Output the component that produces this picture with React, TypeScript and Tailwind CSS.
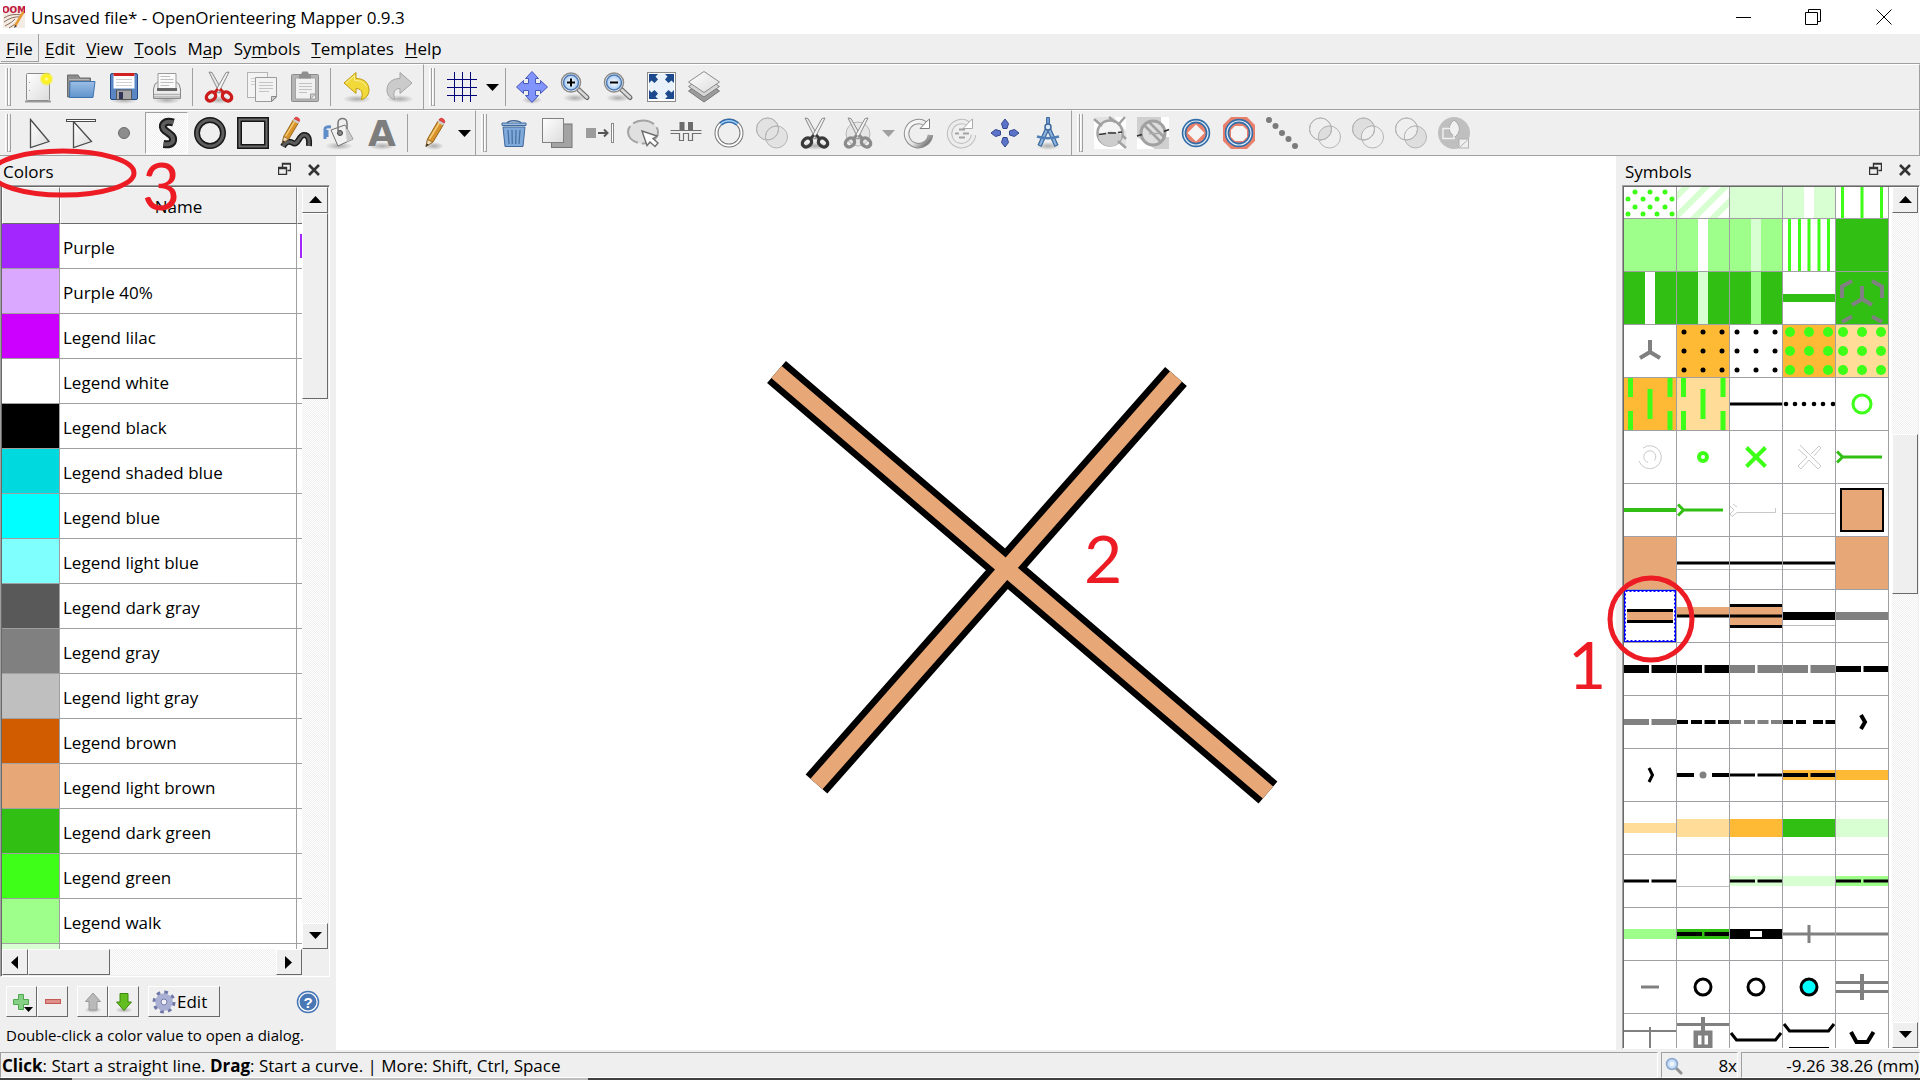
import React from "react";

type Kids = { children?: React.ReactNode };

function Icon({ children }: Kids) {
  return (
    <svg viewBox="0 0 32 32" className="h-8 w-8 shrink-0 overflow-visible" fill="none" aria-hidden="true">
      {children}
    </svg>
  );
}

function Gradients() {
  return (
    <svg className="absolute h-0 w-0" aria-hidden="true">
      <defs>
        <linearGradient id="paper" x1="0" y1="0" x2="1" y2="1">
          <stop offset="0" stopColor="#ffffff" />
          <stop offset="1" stopColor="#dcdcdc" />
        </linearGradient>
        <linearGradient id="blueFolder" x1="0" y1="0" x2="0" y2="1">
          <stop offset="0" stopColor="#9dbfe6" />
          <stop offset="1" stopColor="#5f93cc" />
        </linearGradient>
        <linearGradient id="ring" x1="0" y1="0" x2="1" y2="1">
          <stop offset="0" stopColor="#ffffff" />
          <stop offset="0.6" stopColor="#e2e2e2" />
          <stop offset="1" stopColor="#555555" />
        </linearGradient>
        <radialGradient id="glow">
          <stop offset="0" stopColor="#ffffc0" />
          <stop offset="0.35" stopColor="#fff21a" />
          <stop offset="0.7" stopColor="#f7ee3a" />
          <stop offset="1" stopColor="#fff21a" stopOpacity="0" />
        </radialGradient>
        <radialGradient id="lens">
          <stop offset="0" stopColor="#ffffff" />
          <stop offset="1" stopColor="#a9cbf2" />
        </radialGradient>
        <radialGradient id="shade">
          <stop offset="0" stopColor="#000000" stopOpacity="0.28" />
          <stop offset="1" stopColor="#000000" stopOpacity="0" />
        </radialGradient>
      </defs>
    </svg>
  );
}

const Shadow = ({ y = 28, rx = 14 }: { y?: number; rx?: number }) => <ellipse cx="16" cy={y} rx={rx} ry="4" fill="url(#shade)" />;

const Pencil = () => (
  <>
    <path d="M8 29.500 L9.500 22 L20 4 L25.500 7.500 L15 25 Z" fill="#d8932a" stroke="#8a5a14" strokeWidth="0.900" />
    <path d="M11.500 22 L21.500 5.500" stroke="#f6cf7a" strokeWidth="1.500" />
    <path d="M8 29.500 L9.500 22.500 L14.500 25.300 Z" fill="#f4dfb8" stroke="#8a6a3a" strokeWidth="0.800" />
    <path d="M8 29.500 L8.700 26.500 L10.800 27.800 Z" fill="#222" />
    <path d="M19.500 5 L21 2.500 L26.500 6 L25 8.500 Z" fill="#cfcfcf" />
    <path d="M21 3 C22 -0.500 28 2 26.500 6 Z" fill="#ef4444" stroke="#b91c1c" strokeWidth="0.600" />
  </>
);

const Blades = () => (
  <>
    <path d="M6 1 L9 1.500 L20 21 L16.500 22 Z" fill="#e6e6e6" stroke="#8a8a8a" />
    <path d="M26 1 L23 1.500 L12 21 L15.500 22 Z" fill="#f4f4f4" stroke="#8a8a8a" />
  </>
);

const Handles = ({ c }: { c: string }) => (
  <>
    <ellipse cx="8" cy="25.500" rx="5" ry="4" transform="rotate(-40 8 25.500)" stroke={c} strokeWidth="3.400" />
    <ellipse cx="24" cy="25.500" rx="5" ry="4" transform="rotate(40 24 25.500)" stroke={c} strokeWidth="3.400" />
    <path d="M11 22 L15 18 M21 22 L17 18" stroke={c} strokeWidth="3" />
  </>
);

const NewIcon = () => (
  <Icon>
    <path d="M3 30.500 H29" stroke="#9a9a9a" strokeWidth="2" />
    <rect x="4.500" y="2.500" width="23" height="27" rx="1" fill="url(#paper)" stroke="#8b8b8b" />
    <path d="M7.500 11 v1 M7.500 19 v1" stroke="#999" />
    <circle cx="24.500" cy="8" r="7" fill="url(#glow)" />
  </Icon>
);
const OpenIcon = () => (
  <Icon>
    <path d="M2.500 26 V4 H13 L15 7 H25.500 V26 Z" fill="#8d8d8d" stroke="#6b6b6b" />
    <path d="M4 8.500 H24" stroke="#b5b5b5" />
    <path d="M5 10.500 H30 L28 26.500 H4.500 Z" fill="url(#blueFolder)" stroke="#3f72ad" />
  </Icon>
);
const SaveIcon = () => (
  <Icon>
    <Shadow y={29} />
    <rect x="2.500" y="2.500" width="27" height="26" rx="1.500" fill="#5a87c4" stroke="#234a86" />
    <rect x="5.500" y="2.500" width="21" height="15" fill="#fff" />
    <rect x="5.500" y="2" width="21" height="3" fill="#d02020" />
    <path d="M8 8.500 H24 M8 11.500 H24 M8 14.500 H24" stroke="#cfcfcf" />
    <rect x="8.500" y="19" width="15" height="9.500" fill="#a8a8a8" stroke="#555" />
    <rect x="11" y="21" width="4" height="7" fill="#335" />
  </Icon>
);
const PrintIcon = () => (
  <Icon>
    <Shadow y={29} />
    <path d="M4 13 L7 11 H25 L28 13 L29.500 18 V27.500 H2.500 V18 Z" fill="#ececec" stroke="#8a8a8a" />
    <path d="M7 18 V2.500 H25 V18 Z" fill="#fafafa" stroke="#9a9a9a" />
    <path d="M9.500 5.500 H19 M9.500 8.500 H22.500 M9.500 11.500 H22.500 M9.500 14.500 H18" stroke="#bdbdbd" />
    <rect x="6" y="17" width="20" height="3" fill="#666" />
    <path d="M3 23.500 H29 M3 26 H29" stroke="#b2b2b2" strokeWidth="1.500" />
  </Icon>
);
const CutIcon = () => (
  <Icon>
    <Shadow y={29} />
    <Blades />
    <Handles c="#cc1c1c" />
  </Icon>
);
const CopyIcon = () => (
  <Icon>
    <rect x="1.500" y="1.500" width="20" height="25" fill="#f3f3f3" stroke="#b4b4b4" />
    <path d="M5 7.500 H18 M5 10.500 H18 M5 13.500 H9" stroke="#cfcfcf" />
    <path d="M9.500 6.500 H30.500 V26 L26 30.500 H9.500 Z" fill="#f2f2f2" stroke="#9b9b9b" />
    <path d="M13 11.500 H27 M13 14.500 H27 M13 17.500 H27 M13 20.500 H23" stroke="#c4c4c4" />
    <path d="M30.500 25.500 H25.500 V30.500 Z" fill="#cfcfcf" stroke="#8b8b8b" />
  </Icon>
);
const PasteIcon = () => (
  <Icon>
    <rect x="2.500" y="3.500" width="27" height="27" rx="1" fill="#b4b4b4" stroke="#8d8d8d" />
    <path d="M6.500 7 H26.500 V28 H6.500 Z" fill="#f1f1f1" stroke="#a4a4a4" />
    <path d="M10 3 H12 L13.500 0.500 H18.500 L20 3 H22 V7.500 H10 Z" fill="#8f8f8f" />
    <path d="M10 12.500 H23 M10 15.500 H23 M10 18.500 H23 M10 21.500 H18" stroke="#c2c2c2" />
    <path d="M26.500 23 H21.500 V28 Z" fill="#d2d2d2" stroke="#9b9b9b" />
  </Icon>
);
const turn = "M3 12 L15 1.500 V7.500 C24 7.500 28 13 28 19 C28 24 25 27.500 20 28.500 C22 24 22 17.500 15 17.500 V22.500 Z";
const UndoIcon = () => (
  <Icon>
    <Shadow y={28} />
    <path d={turn} fill="#f2d93a" stroke="#c09c10" strokeLinejoin="round" />
    <path d="M5 12 L13.500 4.500 V9.500 C20 9.500 24 12 25.500 16" stroke="#fbf0a0" />
  </Icon>
);
const RedoIcon = () => (
  <Icon>
    <Shadow y={28} />
    <path d={turn} transform="translate(31 0) scale(-1 1)" fill="#cbcbcb" stroke="#a5a5a5" strokeLinejoin="round" />
  </Icon>
);
const GridIcon = () => (
  <Icon>
    <path d="M8.500 1 V31 M16.500 1 V31 M24.500 1 V31 M1 8.500 H31 M1 16.500 H31 M1 24.500 H31" stroke="#000078" />
  </Icon>
);
const MoveIcon = () => (
  <Icon>
    <Shadow y={29} rx={10} />
    <path
      d="M16 0.500 L22.500 7.500 H19.500 V12.500 H24.500 V9.500 L31.500 16 L24.500 22.500 V19.500 H19.500 V24.500 H22.500 L16 31.500 L9.500 24.500 H12.500 V19.500 H7.500 V22.500 L0.500 16 L7.500 9.500 V12.500 H12.500 V7.500 H9.500 Z"
      fill="#8094fb"
      stroke="#4659b8"
      strokeLinejoin="round"
    />
  </Icon>
);
const Zoom = ({ plus }: { plus: boolean }) => (
  <Icon>
    <Shadow y={27} rx={12} />
    <path d="M19 18 L28 26.500" stroke="#6d6d6d" strokeWidth="5" strokeLinecap="round" />
    <path d="M20 19 L28 26.500" stroke="#d9d9d9" strokeWidth="2.500" strokeLinecap="round" />
    <circle cx="12" cy="11.500" r="9.500" fill="#fff" stroke="#8b8b8b" strokeWidth="1.500" />
    <circle cx="12" cy="11.500" r="7.500" fill="url(#lens)" stroke="#4a78b5" strokeWidth="1.500" />
    <path d={plus ? "M8 11.500 H16 M12 7.500 V15.500" : "M8 11.500 H16"} stroke="#000" strokeWidth="2" />
  </Icon>
);
const FitIcon = () => (
  <Icon>
    <rect x="2.500" y="1.500" width="28" height="29" fill="#fff" stroke="#8a8a8a" />
    <rect x="4" y="3" width="25" height="25" fill="#e9f2fa" />
    <g fill="#1c4a8c">
      <path d="M4 3 H13 L10.500 5.500 L13 8.500 L9.500 12 L6.500 9.500 L4 12 Z" />
      <path d="M29 3 H20 L22.500 5.500 L20 8.500 L23.500 12 L26.500 9.500 L29 12 Z" />
      <path d="M4 28 H13 L10.500 25.500 L13 22.500 L9.500 19 L6.500 21.500 L4 19 Z" />
      <path d="M29 28 H20 L22.500 25.500 L20 22.500 L23.500 19 L26.500 21.500 L29 19 Z" />
    </g>
  </Icon>
);
const LayersIcon = () => (
  <Icon>
    <path d="M0.500 20 L16 9 L31.500 20 L16 31 Z" fill="#9b9b9b" stroke="#777" />
    <path d="M0.500 15.500 L16 5 L31.500 15.500 L16 26 Z" fill="#d5d5d5" stroke="#808080" />
    <path d="M0.500 11 L16 0.500 L31.500 11 L16 21.500 Z" fill="url(#paper)" stroke="#8c8c8c" />
  </Icon>
);

const PointerIcon = () => (
  <Icon>
    <path d="M8.500 2.500 L27 24.500 L8.500 30.500 Z" fill="url(#paper)" stroke="#4b4b4b" strokeWidth="1.300" />
  </Icon>
);
const LineEditIcon = () => (
  <Icon>
    <path d="M8.500 4.500 L26.500 24.500 L8.500 30.500 Z" fill="url(#paper)" stroke="#4b4b4b" strokeWidth="1.300" />
    <rect x="1.500" y="2.500" width="29" height="2" fill="#fff" stroke="#4b4b4b" />
  </Icon>
);
const PointIcon = () => (
  <Icon>
    <circle cx="16" cy="16" r="5.500" fill="#8c8c8c" stroke="#6b6b6b" />
  </Icon>
);
const curve = "M22.500 5.500 C13 2.500 9 9 14 13.500 C19 17 24 20 21.500 25 C19.500 28 16 27.500 12.500 27";
const PathIcon = () => (
  <Icon>
    <path d={curve} stroke="#1a1a1a" strokeWidth="8" strokeLinecap="butt" />
    <path d={curve} stroke="#5c5c5c" strokeWidth="4" />
  </Icon>
);
const CircleIcon = () => (
  <Icon>
    <circle cx="16" cy="16" r="13" fill="#efefef" stroke="#161616" strokeWidth="6" />
    <circle cx="16" cy="16" r="13" stroke="#5c5c5c" strokeWidth="3" />
  </Icon>
);
const RectIcon = () => (
  <Icon>
    <rect x="2.500" y="2.500" width="27" height="27" stroke="#161616" strokeWidth="5" />
    <rect x="2.500" y="2.500" width="27" height="27" stroke="#6a6a6a" strokeWidth="2" />
  </Icon>
);
const freehand = "M3 29.500 C6 24 10 24 13 26 C18 29 19 18 24 18 C29 18 29.500 23 29 29";
const FreehandIcon = () => (
  <Icon>
    <path d={freehand} stroke="#1a1a1a" strokeWidth="6" />
    <path d={freehand} stroke="#5c5c5c" strokeWidth="3" />
    <g transform="translate(-5 -1) scale(0.920)">
      <Pencil />
    </g>
  </Icon>
);
const FillIcon = () => (
  <Icon>
    <Shadow y={29} />
    <path d="M2 22 V12 C2 10 4 9.500 8 10 M4 20 V13" stroke="#5f8dc9" strokeWidth="3" />
    <path d="M8 13 L22 8 L30 22 L15 29 Z" fill="#f1f1f1" stroke="#6f6f6f" strokeLinejoin="round" />
    <path d="M22 8 L30 22 L24 25 Z" fill="#c9c9c9" />
    <path d="M15 14 V6 C15 0 24 0 24 6 V12" stroke="#777" strokeWidth="1.500" />
    <circle cx="17" cy="16" r="2.500" fill="#888" stroke="#444" />
  </Icon>
);
const TextIcon = () => (
  <Icon>
    <Shadow y={29} />
    <text x="16" y="29" textAnchor="middle" className="font-['DejaVu_Sans'] text-[36px] font-bold" fill="#7d7d7d">
      A
    </text>
  </Icon>
);
const PencilIcon = () => (
  <Icon>
    <Shadow y={29} rx={10} />
    <Pencil />
  </Icon>
);
const TrashIcon = () => (
  <Icon>
    <path d="M5 10 H27 L25 29.500 H7 Z" fill="#7fa9da" stroke="#41699a" />
    <path d="M10 13 L11 27 M14 13 L14.300 27 M18 13 L17.700 27 M22 13 L21 27" stroke="#48719f" strokeWidth="1.300" />
    <path d="M4 8.500 V6 H28 V8.500 Z" fill="#9dbfe6" stroke="#41699a" />
    <path d="M9 6 C11 3 21 3 23 6" stroke="#41699a" strokeWidth="1.500" />
  </Icon>
);
const DuplicateIcon = () => (
  <Icon>
    <rect x="10.500" y="7" width="20.500" height="23.500" fill="#a3a3a3" stroke="#777" />
    <rect x="1.500" y="1.500" width="21" height="24" fill="url(#paper)" stroke="#808080" />
  </Icon>
);
const SwitchIcon = () => (
  <Icon>
    <rect x="2" y="11" width="10" height="10" fill="#9c9c9c" />
    <path d="M14 16 H23 M20 12.500 L23.500 16 L20 19.500" stroke="#555" strokeWidth="2" />
    <rect x="27.500" y="6.500" width="2" height="19" fill="#fff" stroke="#8a8a8a" />
  </Icon>
);
const RotateSelIcon = () => (
  <Icon>
    <ellipse cx="16" cy="15" rx="15" ry="11.500" fill="#e0e0e0" stroke="#a3a3a3" strokeWidth="2" strokeDasharray="22 4" />
    <path d="M15 14 L30 19 L26 21.500 L31 26 L28 29.500 L23 25 L20 28.500 Z" fill="#fff" stroke="#6e6e6e" strokeWidth="1.400" />
  </Icon>
);
const BreakIcon = () => (
  <Icon>
    <path d="M9.500 5 h5 v8 h-5 z M18 5 h5 v8 h-5 z" fill="#6b6b6b" />
    <path d="M0.500 13.500 H31.500 M0.500 16.500 H9.500 V23.500 H13.500 V16.500 H18.500 V23.500 H22.500 V16.500 H31.500" stroke="#707070" strokeWidth="1.200" />
  </Icon>
);
const RingIcon = () => (
  <Icon>
    <circle cx="16" cy="16" r="12.500" stroke="#777" strokeWidth="4" />
    <circle cx="16" cy="16" r="12.500" stroke="#fff" strokeWidth="2" />
    <path d="M7.500 7 A12.500 12.500 0 0 1 24.500 7" stroke="#2c6cb0" strokeWidth="4" />
    <path d="M7.500 7 A12.500 12.500 0 0 1 24.500 7" stroke="#a6d0f5" strokeWidth="1.500" />
  </Icon>
);
const Venn = ({ left = "none", right = "none", mid = "none" }: { left?: string; right?: string; mid?: string }) => (
  <Icon>
    <circle cx="11.500" cy="12" r="11" fill={left} stroke="#b5b5b5" />
    <circle cx="20.500" cy="20" r="11" fill={right} stroke="#b5b5b5" />
    <path d="M9.700 22.700 A11 11 0 0 1 22.200 9.200 A11 11 0 0 1 9.700 22.700 Z" fill={mid} stroke="#b5b5b5" />
    <circle cx="11.500" cy="12" r="11" stroke="#b5b5b5" />
  </Icon>
);
const SplitIcon = () => (
  <Icon>
    <Shadow y={29} />
    <Blades />
    <Handles c="#3a3a3a" />
  </Icon>
);
const CutHoleIcon = () => (
  <Icon>
    <circle cx="16" cy="17" r="12" fill="#e6e6e6" stroke="#b8b8b8" />
    <Blades />
    <Handles c="#8b8b8b" />
  </Icon>
);
const RotateIcon = ({ faint = false }: { faint?: boolean }) => (
  <Icon>
    <path d="M22 6.500 A12 12 0 1 0 27.500 18" stroke={faint ? "#bcbcbc" : "#8f8f8f"} strokeWidth="5.500" />
    <path d="M22 6.500 A12 12 0 1 0 27.500 18" stroke={faint ? "#ececec" : "url(#ring)"} strokeWidth="3.500" />
    <path d="M26.500 2 V11.500 H17 L20.500 8 L23 5 Z" fill="#fff" stroke={faint ? "#aaa" : "#7f7f7f"} />
    {faint && <path d="M13 12.500 h6 M9 16.500 h4 M17 16.500 h6 M13 20.500 h6" stroke="#a3a3a3" strokeWidth="2" />}
  </Icon>
);
const ScaleIcon = () => (
  <Icon>
    <g fill="#5b74c9" stroke="#34468c" strokeLinejoin="round">
      <path d="M16 2 L19.500 6.500 L18 11.500 H14 L12.500 6.500 Z" />
      <path d="M16 30 L19.500 25.500 L18 20.500 H14 L12.500 25.500 Z" />
      <path d="M2 16 L6.500 12.500 L11.500 14 V18 L6.500 19.500 Z" />
      <path d="M30 16 L25.500 12.500 L20.500 14 V18 L25.500 19.500 Z" />
    </g>
  </Icon>
);
const MeasureIcon = () => (
  <Icon>
    <Shadow y={29} rx={12} />
    <path d="M14.500 0.500 h3 v7 h-3 z" fill="#6d9bd1" stroke="#3f6a9c" />
    <path d="M16 10 L7.500 29 M16 10 L24.500 29" stroke="#3f6a9c" strokeWidth="4.500" />
    <path d="M16 10 L8 28 M16 10 L24 28" stroke="#8fb6e2" strokeWidth="2" />
    <path d="M5 19.500 Q16 23 27 19.500" stroke="#4f7eb4" strokeWidth="2.500" />
    <circle cx="16" cy="10" r="3" fill="#dbe9f8" stroke="#3f6a9c" strokeWidth="1.500" />
  </Icon>
);
const CutawayIcon = () => (
  <Icon>
    <rect width="32" height="32" fill="#fff" />
    <path d="M0 0 L32 32 V14 L20 0 Z" fill="#e2e2e2" />
    <circle cx="16" cy="16" r="12.500" fill="#f4f4f4" stroke="#a1a1a1" strokeWidth="2.500" />
    <path d="M4 20 Q16 10 28 18 A12 12 0 0 1 6 24 Z" fill="#cdcdcd" />
    <path d="M0 2 L8 9 M15 0 L21 5 M24 24 L32 31 M24 8 L31 0 M28 18 L32 22" stroke="#a1a1a1" strokeWidth="2.500" />
    <path d="M5 17.500 L12 16.500 M14 16 H22 M24 15.500 L28 15" stroke="#333" strokeWidth="1.600" />
  </Icon>
);
const CutawayOutIcon = () => (
  <Icon>
    <rect width="32" height="32" fill="#fff" />
    <path d="M0 0 H24 V20 H32 V32 H18 L0 20 Z" fill="#cfcfcf" />
    <circle cx="16" cy="16" r="12" fill="#dedede" stroke="#a1a1a1" strokeWidth="3" />
    <path d="M7 8 L24 25 M12 5 L27 20" stroke="#a1a1a1" strokeWidth="2.500" />
    <path d="M0 19 L5 17.500 M27 14.500 L32 12.500" stroke="#333" strokeWidth="1.800" />
    <path d="M12 16.500 H22" stroke="#aaa" strokeWidth="1.500" />
  </Icon>
);
const DoubleRing = () => (
  <>
    <circle cx="16" cy="16" r="12" stroke="#336da8" strokeWidth="4.500" />
    <circle cx="16" cy="16" r="12" stroke="#e6f0fa" strokeWidth="1.200" />
  </>
);
const InnerIcon = () => (
  <Icon>
    <circle cx="16" cy="16" r="12" fill="#e9806b" />
    <path d="M16 7.500 L24.500 16 L16 24.500 L7.500 16 Z" fill="#f4f4f4" />
    <DoubleRing />
  </Icon>
);
const OuterIcon = () => (
  <Icon>
    <path d="M8 0 H24 L32 8 V24 L24 32 H8 L0 24 V8 Z" fill="#e9806b" />
    <path d="M12 9 H20 L24 13 V20 L20 24 H12 L8 20 V13 Z" fill="#f4f4f4" />
    <DoubleRing />
  </Icon>
);
const DotsIcon = () => (
  <Icon>
    <g fill="#7b7b7b">
      <circle cx="3" cy="3" r="3" />
      <circle cx="9.500" cy="9" r="3" />
      <circle cx="16" cy="16" r="3" />
      <circle cx="22.500" cy="22" r="3" />
      <circle cx="29" cy="29" r="3" />
    </g>
  </Icon>
);
const ShapeIcon = () => (
  <Icon>
    <circle cx="16" cy="16" r="16" fill="#bfbfbf" />
    <path d="M16 3 C23 8 23 15 17 20 C9 15 10 8 16 3 Z" fill="#f0f0f0" stroke="#a9a9a9" />
    <rect x="5" y="11.500" width="11" height="10" stroke="#f0f0f0" strokeWidth="1.500" />
    <rect x="21" y="22" width="9.500" height="9" fill="#efefef" stroke="#b2b2b2" />
    <path d="M22 30 L29.500 23" stroke="#b2b2b2" />
  </Icon>
);

function Tool({ label, pressed = false, children }: { label: string; pressed?: boolean } & Kids) {
  return (
    <button
      type="button"
      aria-label={label}
      className={
        pressed
          ? "flex h-[42px] w-[43px] shrink-0 items-center justify-center border border-t-[#a0a0a0] border-r-white border-b-white border-l-[#a0a0a0] bg-[repeating-conic-gradient(#fff_0_25%,#efefef_0_50%)] bg-[length:2px_2px]"
          : "flex h-[42px] w-[43px] shrink-0 items-center justify-center"
      }
    >
      {children}
    </button>
  );
}

function Drop({ label, faint = false }: { label: string; faint?: boolean }) {
  return (
    <button type="button" aria-label={label} className="flex h-10 w-[18px] shrink-0 items-center justify-center">
      <svg viewBox="0 0 13 7" className="h-[7px] w-[13px]" aria-hidden="true">
        <path d="M0 0 H13 L6.500 7 Z" fill={faint ? "#a0a0a0" : "#000"} />
      </svg>
    </button>
  );
}

const Divider = () => <span className="mx-1 h-[38px] w-px shrink-0 bg-[#a0a0a0]" />;

function Grip() {
  return (
    <span className="mx-[5px] flex h-[38px] w-[6px] shrink-0">
      <span className="w-[3px] border-r border-l border-l-white border-r-[#a0a0a0]" />
      <span className="w-[3px] border-r border-b border-l border-l-white border-r-[#a0a0a0] border-b-[#a0a0a0]" />
    </span>
  );
}

function Strip({ label, grow = false, children }: { label: string; grow?: boolean } & Kids) {
  return (
    <div
      role="toolbar"
      aria-label={label}
      className={
        grow
          ? "flex min-w-0 flex-1 items-center overflow-hidden border-t border-r border-b border-t-white border-r-[#a0a0a0] border-b-[#a0a0a0]"
          : "flex shrink-0 items-center border-t border-r border-b border-t-white border-r-[#a0a0a0] border-b-[#a0a0a0] pr-[2px]"
      }
    >
      {children}
    </div>
  );
}

const menus: [string, string, string][] = [
  ["", "F", "ile"],
  ["", "E", "dit"],
  ["", "V", "iew"],
  ["", "T", "ools"],
  ["M", "a", "p"],
  ["Sy", "m", "bols"],
  ["", "T", "emplates"],
  ["", "H", "elp"],
];

function TitleBar() {
  return (
    <header className="flex h-[34px] shrink-0 items-center bg-white pl-[3px]">
      <svg viewBox="0 0 22 24" className="h-6 w-[22px]" aria-hidden="true">
        <rect y="1" width="22" height="22" fill="#f3ece4" />
        <path d="M1 13 Q8 8 19 10 M1 17 Q9 11 18 12 M2 21 Q10 17 12 14 M6 23 Q13 19 15 16" stroke="#8d6a58" fill="none" />
        <path d="M12 21 L21 6" stroke="#e89a35" strokeWidth="2.500" />
        <path d="M11 23 L12 20 L14 21 Z" fill="#333" />
        <text x="11" y="8" textAnchor="middle" className="font-['DejaVu_Sans'] text-[9px] font-bold" fill="#c0143c">
          OOM
        </text>
      </svg>
      <h1 className="ml-[6px] flex-1 pt-[2px] text-[17px] leading-6">Unsaved file* - OpenOrienteering Mapper 0.9.3</h1>
      <div className="flex h-full">
        <button type="button" aria-label="Minimize" className="flex h-full w-[70px] items-center justify-center">
          <span className="h-px w-[15px] bg-black" />
        </button>
        <button type="button" aria-label="Restore" className="flex h-full w-[70px] items-center justify-center">
          <svg viewBox="0 0 16 16" className="h-4 w-4" fill="none" stroke="#000" aria-hidden="true">
            <path d="M0.500 3.500 H12.500 V15.500 H0.500 Z M3.500 3.500 V0.500 H15.500 V12.500 H12.500" />
          </svg>
        </button>
        <button type="button" aria-label="Close" className="flex h-full w-[72px] items-center justify-center">
          <svg viewBox="0 0 16 16" className="h-4 w-4" stroke="#000" aria-hidden="true">
            <path d="M0.500 0.500 L15.500 15.500 M15.500 0.500 L0.500 15.500" />
          </svg>
        </button>
      </div>
    </header>
  );
}

function MenuBar() {
  return (
    <nav className="flex h-[30px] shrink-0 items-stretch gap-px border-b border-b-[#a0a0a0] pl-px text-[17px] leading-6">
      {menus.map(([a, b, c], i) => (
        <button
          key={a + b + c}
          type="button"
          className={i === 0 ? "mb-px border-r border-b border-r-[#a0a0a0] border-b-[#a0a0a0] px-[5px] pt-[3px]" : "px-[5px] pt-px"}
        >
          {a}
          <span className="underline underline-offset-2">{b}</span>
          {c}
        </button>
      ))}
    </nav>
  );
}

function ToolBars() {
  return (
    <>
      <div className="flex h-[46px] shrink-0">
        <Strip label="File and edit">
          <Grip />
          <Tool label="New"><NewIcon /></Tool>
          <Tool label="Open"><OpenIcon /></Tool>
          <Tool label="Save"><SaveIcon /></Tool>
          <Tool label="Print"><PrintIcon /></Tool>
          <Divider />
          <Tool label="Cut"><CutIcon /></Tool>
          <Tool label="Copy"><CopyIcon /></Tool>
          <Tool label="Paste"><PasteIcon /></Tool>
          <Divider />
          <Tool label="Undo"><UndoIcon /></Tool>
          <Tool label="Redo"><RedoIcon /></Tool>
        </Strip>
        <Strip label="View" grow>
          <Grip />
          <Tool label="Show grid"><GridIcon /></Tool>
          <Drop label="Grid options" />
          <Divider />
          <Tool label="Pan"><MoveIcon /></Tool>
          <Tool label="Zoom in"><Zoom plus /></Tool>
          <Tool label="Zoom out"><Zoom plus={false} /></Tool>
          <Tool label="Show whole map"><FitIcon /></Tool>
          <Tool label="Hatch areas"><LayersIcon /></Tool>
        </Strip>
      </div>
      <div className="flex h-[46px] shrink-0">
        <Strip label="Drawing">
          <Grip />
          <Tool label="Edit objects"><PointerIcon /></Tool>
          <Tool label="Edit lines"><LineEditIcon /></Tool>
          <Tool label="Draw points"><PointIcon /></Tool>
          <Tool label="Draw paths" pressed><PathIcon /></Tool>
          <Tool label="Draw circles"><CircleIcon /></Tool>
          <Tool label="Draw rectangles"><RectIcon /></Tool>
          <Tool label="Draw freehand"><FreehandIcon /></Tool>
          <Tool label="Fill bounded areas"><FillIcon /></Tool>
          <Tool label="Write text"><TextIcon /></Tool>
          <Divider />
          <Tool label="Paint on template"><PencilIcon /></Tool>
          <Drop label="Template options" />
        </Strip>
        <Strip label="Editing">
          <Grip />
          <Tool label="Delete"><TrashIcon /></Tool>
          <Tool label="Duplicate"><DuplicateIcon /></Tool>
          <Tool label="Switch symbol"><SwitchIcon /></Tool>
          <Tool label="Fill or create border"><RotateSelIcon /></Tool>
          <Tool label="Switch dashes"><BreakIcon /></Tool>
          <Tool label="Connect paths"><RingIcon /></Tool>
          <Tool label="Unify areas"><Venn left="#e2e2e2" right="#e2e2e2" /></Tool>
          <Tool label="Cut object"><SplitIcon /></Tool>
          <Tool label="Cut free form hole"><CutHoleIcon /></Tool>
          <Drop label="Hole options" faint />
          <Tool label="Rotate objects"><RotateIcon /></Tool>
          <Tool label="Rotate pattern"><RotateIcon faint /></Tool>
          <Tool label="Scale objects"><ScaleIcon /></Tool>
          <Tool label="Measure lengths"><MeasureIcon /></Tool>
        </Strip>
        <Strip label="Advanced editing" grow>
          <Grip />
          <Tool label="Cutout"><CutawayIcon /></Tool>
          <Tool label="Cut away"><CutawayOutIcon /></Tool>
          <Tool label="Convert to curves"><InnerIcon /></Tool>
          <Tool label="Simplify path"><OuterIcon /></Tool>
          <Tool label="Distribute points"><DotsIcon /></Tool>
          <Tool label="Intersect areas"><Venn mid="#dedede" /></Tool>
          <Tool label="Area difference"><Venn left="#dedede" mid="#efefef" /></Tool>
          <Tool label="Area XOR"><Venn right="#dedede" mid="#efefef" /></Tool>
          <Tool label="Merge area holes"><ShapeIcon /></Tool>
        </Strip>
      </div>
    </>
  );
}

function DockTitle({ children }: Kids) {
  return (
    <div className="flex h-[29px] shrink-0 items-center">
      <h2 className="flex-1 pt-[3px] text-[17px] leading-6">{children}</h2>
      <button type="button" aria-label="Float panel" className="mb-1 flex h-5 w-[29px] items-center justify-center">
        <svg viewBox="0 0 13 13" className="h-[13px] w-[13px]" fill="none" stroke="#333" aria-hidden="true">
          <path d="M4.500 6 V1.500 H12.500 V8.500 H9.500 M4.500 2 H12.500" strokeWidth="1.400" />
          <path d="M0.500 5.500 H8.500 V12.500 H0.500 Z M0.500 6.500 H8.500" strokeWidth="1.400" />
        </svg>
      </button>
      <button type="button" aria-label="Close panel" className="mb-[2px] flex h-5 w-[29px] items-center justify-center">
        <svg viewBox="0 0 12 12" className="h-3 w-3" stroke="#333" strokeWidth="2.600" aria-hidden="true">
          <path d="M1 1 L11 11 M11 1 L1 11" />
        </svg>
      </button>
    </div>
  );
}

const raised = "border border-t-white border-l-white border-r-[#696969] border-b-[#696969] bg-[#efefef]";

function ScrollArrow({ dir, label }: { dir: "up" | "down" | "left" | "right"; label: string }) {
  const d = {
    up: "M0 9 L6.500 2 L13 9 Z",
    down: "M0 2 H13 L6.500 9 Z",
    left: "M9 0 V13 L2 6.500 Z",
    right: "M2 0 V13 L9 6.500 Z",
  }[dir];
  return (
    <button type="button" aria-label={label} className={`${raised} flex h-[26px] w-[26px] shrink-0 items-center justify-center`}>
      <svg viewBox="0 0 13 13" className="h-[13px] w-[13px]" aria-hidden="true">
        <path d={d} />
      </svg>
    </button>
  );
}

const track = "bg-[repeating-conic-gradient(#fff_0_25%,#efefef_0_50%)] bg-[length:2px_2px]";

const colors: [string, string][] = [
  ["Purple", "#a426ff"],
  ["Purple 40%", "#dba8ff"],
  ["Legend lilac", "#cc00ff"],
  ["Legend white", "#ffffff"],
  ["Legend black", "#000000"],
  ["Legend shaded blue", "#00d9de"],
  ["Legend blue", "#00ffff"],
  ["Legend light blue", "#80ffff"],
  ["Legend dark gray", "#595959"],
  ["Legend gray", "#808080"],
  ["Legend light gray", "#bfbfbf"],
  ["Legend brown", "#d15c00"],
  ["Legend light brown", "#e8a777"],
  ["Legend dark green", "#30bf12"],
  ["Legend green", "#3dff17"],
  ["Legend walk", "#9fff8b"],
  ["", "#d8ffd1"],
];

function ColorsPanel() {
  return (
    <aside className="relative flex w-[336px] shrink-0 flex-col">
      <div className="pr-2 pl-[3px]">
        <DockTitle>Colors</DockTitle>
      </div>
      <div className="mr-[6px] flex min-h-0 flex-1 flex-col border border-t-[#a0a0a0] border-r-white border-b-white border-l-[#a0a0a0]">
        <div className="flex min-h-0 flex-1 border-t border-l border-[#696969] pr-px">
          <div className="min-h-0 flex-1 overflow-hidden bg-white">
            <table className="w-full table-fixed border-separate border-spacing-0 text-[17px] leading-6">
              <colgroup>
                <col className="w-[58px]" />
                <col className="w-[237px]" />
                <col />
              </colgroup>
              <thead>
                <tr className="h-[37px] bg-[#efefef]">
                  <th className="border border-t-white border-r-[#808080] border-b-[#696969] border-l-white" aria-label="Swatch" />
                  <th className="border border-t-white border-r-[#808080] border-b-[#696969] border-l-white px-0 pt-[3px] pb-0 text-center font-normal">
                    Name
                  </th>
                  <th className="border-t border-b border-l border-t-white border-b-[#696969] border-l-white" aria-label="Spot color" />
                </tr>
              </thead>
              <tbody>
                {colors.map(([name, c], i) => (
                  <tr key={c} className="h-[45px]">
                    <td className="border-r border-b border-[#a0a0a0] p-0" style={{ backgroundColor: c }} />
                    <td className="border-r border-b border-[#a0a0a0] pt-[3px] pr-0 pb-0 pl-[3px]">{name}</td>
                    <td className="border-b border-[#a0a0a0] p-0">
                      {i === 0 && <span className="ml-auto block h-6 w-[2px] bg-[#a426ff]" />}
                    </td>
                  </tr>
                ))}
              </tbody>
            </table>
          </div>
          <div className={`${track} flex w-[26px] shrink-0 flex-col`}>
            <ScrollArrow dir="up" label="Scroll up" />
            <div className={`${raised} h-[186px] w-full`} />
            <div className="flex-1" />
            <ScrollArrow dir="down" label="Scroll down" />
          </div>
        </div>
        <div className="flex h-[27px] shrink-0 border-l border-[#696969] pb-px">
          <div className={`${track} flex flex-1`}>
            <ScrollArrow dir="left" label="Scroll left" />
            <div className={`${raised} h-[26px] w-[82px]`} />
            <div className="flex-1" />
            <ScrollArrow dir="right" label="Scroll right" />
          </div>
          <div className="w-[27px]" />
        </div>
      </div>
      <div className="mt-[9px] flex h-[31px] shrink-0 items-stretch pl-[6px] text-[17px] leading-6">
        <button type="button" aria-label="Add color" className={`${raised} flex w-[31px] items-center justify-center`}>
          <svg viewBox="0 0 24 24" className="h-6 w-6" aria-hidden="true">
            <path d="M8.500 4.500 H13.500 V9.500 H18.500 V14.500 H13.500 V19.500 H8.500 V14.500 H3.500 V9.500 H8.500 Z" fill="#86d086" stroke="#4da84d" />
            <path d="M14 17 H23 L18.500 22 Z" fill="#000" />
          </svg>
        </button>
        <button type="button" aria-label="Remove color" className={`${raised} flex w-[31px] items-center justify-center`}>
          <span className="h-[5px] w-4 border border-[#c25a55] bg-[#de8f88]" />
        </button>
        <button type="button" aria-label="Move up" className={`${raised} ml-[9px] flex w-[31px] items-center justify-center`}>
          <svg viewBox="0 0 20 22" className="h-[22px] w-5" aria-hidden="true">
            <ellipse cx="10" cy="19" rx="9" ry="3" fill="url(#shade)" />
            <path d="M10 2 L17.500 10.500 H14 V19 H6 V10.500 H2.500 Z" fill="#b9b9b9" stroke="#999" strokeLinejoin="round" />
          </svg>
        </button>
        <button type="button" aria-label="Move down" className={`${raised} flex w-[31px] items-center justify-center`}>
          <svg viewBox="0 0 20 22" className="h-[22px] w-5" aria-hidden="true">
            <ellipse cx="10" cy="19" rx="9" ry="3" fill="url(#shade)" />
            <path d="M10 19.500 L17.500 11 H14 V2.500 H6 V11 H2.500 Z" fill="#62bd1e" stroke="#3d8a0c" strokeLinejoin="round" />
          </svg>
        </button>
        <button type="button" className={`${raised} ml-[9px] flex w-[72px] items-center gap-px pl-[3px]`}>
          <svg viewBox="0 0 24 24" className="h-6 w-6" fill="none" aria-hidden="true">
            <circle cx="12" cy="12" r="9.500" stroke="#6f78a8" strokeWidth="4" strokeDasharray="3.500 3.960" />
            <circle cx="12" cy="12" r="6" stroke="#a9b0d4" strokeWidth="5.500" />
            <circle cx="12" cy="12" r="3" fill="#f0f0f6" stroke="#6f78a8" />
          </svg>
          Edit
        </button>
        <button type="button" aria-label="Help" className="mr-4 ml-auto flex items-center">
          <svg viewBox="0 0 24 24" className="h-6 w-6" aria-hidden="true">
            <circle cx="12" cy="12" r="10.500" fill="#fff" stroke="#4a78b5" strokeWidth="1.500" />
            <circle cx="12" cy="12" r="8.500" fill="#4a78b5" />
            <text x="12" y="17.500" textAnchor="middle" className="font-['Liberation_Sans'] text-[15px] font-bold" fill="#fff">
              ?
            </text>
          </svg>
        </button>
      </div>
      <p className="mt-[6px] mb-[5px] h-6 pl-[6px] text-[15px] leading-6 whitespace-nowrap">Double-click a color value to open a dialog.</p>
      <svg className="pointer-events-none absolute top-[-9px] left-0 h-[54px] w-[140px]" viewBox="0 0 140 54" fill="none" aria-hidden="true">
        <ellipse cx="63" cy="26" rx="71" ry="22" stroke="#ed1c24" strokeWidth="5" />
      </svg>
      <span className="pointer-events-none absolute -top-1 left-[142px] font-['Lato'] text-[66px] leading-[66px] text-[#ed1c24]">3</span>
    </aside>
  );
}

const G = "#3dff17";
const DG = "#30bf12";
const W = "#9fff8b";
const L = "#d8ffd1";
const OR = "#ffba35";
const Y = "#ffdc98";
const BR = "#e8a777";
const GY = "#808080";
const K = "#000";

const Fill = ({ c }: { c: string }) => <rect width="52" height="52" fill={c} />;
const VBar = ({ c }: { c: string }) => <rect x="21" width="10" height="52" fill={c} />;
const Band = ({ c, y = 21, h = 10 }: { c: string; y?: number; h?: number }) => <rect y={y} width="52" height={h} fill={c} />;
const Ln = ({ d, c = K, w = 3, fill = "none" }: { d: string; c?: string; w?: number; fill?: string }) => (
  <path d={d} stroke={c} strokeWidth={w} fill={fill} />
);
const Dash = ({ c = K, w = 4 }: { c?: string; w?: number }) => <Ln d="M0 26 H25 M27.500 26 H52" c={c} w={w} />;
const Dots = ({ c, r }: { c: string; r: number }) => (
  <g fill={c}>
    {[7, 26, 45].map((y) => [7, 26, 45].map((x) => <circle key={`${x}-${y}`} cx={x} cy={y} r={r} />))}
  </g>
);
const Ring = ({ c = K, r, w, fill = "none" }: { c?: string; r: number; w: number; fill?: string }) => (
  <circle cx="26" cy="26" r={r} stroke={c} strokeWidth={w} fill={fill} />
);
const bars = "M6.500 0 V19 M6.500 33 V52 M46 0 V19 M46 33 V52 M26 11 V41";
const tree = "M26 15 V27 M26 27 L16 33 M26 27 L36 33";
const fork = "M5 26 H46 M1 20.500 L6.500 26 L1 31.500";

const symbols: React.ReactNode[] = [
  <g fill={G}>
    {[26, 41].map((y) => [11, 26, 41].map((x) => <circle key={`${x}-${y}`} cx={x} cy={y} r="2.500" />))}
    {[33, 48].map((y) => [4, 19, 33, 48].map((x) => <circle key={`${x}-${y}`} cx={x} cy={y} r="2.500" />))}
  </g>,
  <Ln d="M-10 40 L40 -10 M-10 60 L60 -10 M-10 79 L70 -1 M0 88 L70 18" c={L} w={6} />,
  <Fill c={L} />,
  <><Fill c={L} /><VBar c="#fff" /></>,
  <Ln d="M6.500 0 V52 M26 0 V52 M45.500 0 V52" c={G} />,

  <Fill c={W} />,
  <><Fill c={W} /><VBar c="#fff" /></>,
  <><Fill c={W} /><VBar c={L} /></>,
  <Ln d="M6.500 0 V52 M16.500 0 V52 M26 0 V52 M36 0 V52 M45.500 0 V52" c={G} />,
  <Fill c={DG} />,

  <><Fill c={DG} /><VBar c="#fff" /></>,
  <><Fill c={DG} /><VBar c={L} /></>,
  <><Fill c={DG} /><VBar c={W} /></>,
  <Band c={DG} y={22} h={8} />,
  <>
    <Fill c={DG} />
    <Ln d="M26 14 V27 M26 27 L16 33 M26 27 L36 33 M16 9 L6 14.500 V26 M36 9 L46 14.500 V26 M6 50 L16 44.500 M46 50 L36 44.500" c={GY} w={4} />
  </>,

  <Ln d={tree} c={GY} w={4} />,
  <><Fill c={OR} /><Dots c={K} r={2.5} /></>,
  <Dots c={K} r={2.5} />,
  <><Fill c={OR} /><Dots c={G} r={5} /></>,
  <><Fill c={Y} /><Dots c={G} r={5} /></>,

  <><Fill c={OR} /><Ln d={bars} c={G} w={5} /></>,
  <><Fill c={Y} /><Ln d={bars} c={G} w={5} /></>,
  <Ln d="M0 26 H52" />,
  <g>{[3, 12, 21, 31, 40, 50].map((x) => <circle key={x} cx={x} cy="26" r="2.300" />)}</g>,
  <Ring c={G} r={9} w={3} />,

  <g stroke="#bbb" fill="none" strokeWidth="0.800">
    <path d="M15 30 A11.500 11.500 0 1 0 19 17" />
    <path d="M24 31.500 A6 6 0 1 1 30.500 29.500" />
  </g>,
  <Ring c={G} r={4} w={4} />,
  <Ln d="M16.500 16.500 L35.500 35.500 M35.500 16.500 L16.500 35.500" c={G} w={4} />,
  <Ln d="M15 18 L24 26 L15 35 L18 38 L26 29 L35 38 L38 35 L17 14 M28 23 L36 15 L38 17 L31 25" c="#bbb" w={0.8} />,
  <Ln d={fork} c={DG} w={3} />,

  <Ln d="M0 26 H52" c={DG} w={4} />,
  <Ln d={fork} c={DG} w={3} />,
  <Ln d="M7 28.500 H45.500 V24 M0 22 L4 26 L0 30 L2 32.500 L7 28.500 M3 20 L7 23" c="#bbb" w={0.8} />,
  <Ln d="M0 29.500 H52" c="#bbb" w={1} />,
  <rect x="5" y="5" width="42" height="42" fill={BR} stroke={K} strokeWidth="2" />,

  <Fill c={BR} />,
  <><Ln d="M0 26 H52" /><Ln d="M0 32.500 H52" c="#bbb" w={1} /></>,
  <><Ln d="M0 26 H52" /><Ln d="M0 32.500 H52" c="#bbb" w={1} /></>,
  <><Ln d="M0 26 H52" /><Ln d="M0 32.500 H52" c="#bbb" w={1} /></>,
  <Fill c={BR} />,

  <>
    <rect x="3" y="20" width="46" height="12" fill={BR} />
    <Ln d="M3 20.500 H49 M3 31.500 H49" />
    <rect x="0.500" y="0.500" width="51" height="51" fill="none" stroke="#0000ff" />
    <rect x="1.500" y="1.500" width="49" height="49" fill="none" stroke="#0000ff" strokeDasharray="2 2" />
  </>,
  <><Band c={BR} y={17} h={8} /><Ln d="M0 26 H52" /></>,
  <><Band c={BR} y={15} h={22} /><Ln d="M0 15.500 H52 M0 26 H52 M0 36.500 H52" /></>,
  <><Band c={K} y={22} h={8} /><Ln d="M0 35.500 H52" c="#bbb" w={1} /></>,
  <Band c={GY} y={22} h={8} />,

  <Dash w={8} />,
  <Dash w={8} />,
  <Dash c={GY} w={8} />,
  <Dash c={GY} w={8} />,
  <Dash w={6} />,

  <Dash c={GY} w={6} />,
  <Ln d="M0 26 H11 M14 26 H25 M27.500 26 H38.500 M41 26 H52" w={4} />,
  <Ln d="M0 26 H11 M14 26 H25 M27.500 26 H38.500 M41 26 H52" c={GY} w={4} />,
  <Ln d="M0 26 H10 M13 26 H23 M30 26 H40 M42.500 26 H52" w={4} />,
  <Ln d="M25 19 L29 26 L25 33" w={4} />,

  <Ln d="M25 19 L28.500 26 L25 33" />,
  <><Ln d="M0 26 H17 M35 26 H52" w={4} /><circle cx="26" cy="26" r="3.500" fill={GY} /></>,
  <Dash w={3} />,
  <><Band c={OR} /><Dash w={4} /></>,
  <Band c={OR} />,

  <Band c={Y} />,
  <Band c={Y} y={17} h={18} />,
  <Band c={OR} y={17} h={18} />,
  <Band c={DG} y={17} h={18} />,
  <Band c={L} y={17} h={18} />,

  <Dash w={3} />,
  <Ln d="M0 31.500 H52" c="#bbb" w={1} />,
  <><Band c={L} /><Dash w={3} /></>,
  <Band c={L} />,
  <><Band c={W} /><Dash w={3} /></>,

  <Band c={W} />,
  <><Band c={DG} /><Dash w={4} /></>,
  <><Band c={K} /><rect x="20" y="23" width="12" height="6" fill="#fff" /></>,
  <Ln d="M0 26 H52 M26 17 V35" c={GY} w={3} />,
  <Ln d="M0 26 H52" c={GY} w={3} />,

  <Ln d="M17 26 H35" c={GY} w={3} />,
  <Ring r={8} w={3} />,
  <Ring r={8} w={3} />,
  <Ring r={8} w={3} fill="#00ffff" />,
  <><Ln d="M0 21.500 H52 M0 30.500 H52" c={GY} /><Ln d="M26 13 V39" c={GY} w={4} /></>,

  <Ln d="M0 17 H52 M26 13 V52" c={GY} w={2} />,
  <>
    <Ln d="M0 10.500 H52" c={GY} />
    <Ln d="M26 3 V17" c={GY} w={4} />
    <rect x="16.500" y="16.500" width="19" height="24" fill={GY} />
    <path d="M21 21.500 h3.500 v9 h-3.500 z M27.500 21.500 h3.500 v9 h-3.500 z" fill="#fff" />
  </>,
  <Ln d="M1 19 L6.500 26 H45.500 L51 19" />,
  <Ln d="M1 10 L6.500 17 H45.500 L51 10 M6 34.500 H46" />,
  <Ln d="M15 18 L20.500 28 H31.500 L37.500 18" w={4} />,
];

function SymbolsPanel() {
  return (
    <aside className="relative z-10 flex w-[304px] shrink-0 flex-col bg-[#efefef]">
      <div className="pr-[1px] pl-[9px]">
        <DockTitle>Symbols</DockTitle>
      </div>
      <div className="mb-[3px] ml-[6px] flex min-h-0 flex-1 border border-t-[#a0a0a0] border-r-white border-b-white border-l-[#a0a0a0]">
        <div className="flex min-h-0 flex-1 border-t border-l border-[#696969] pr-px">
          <div className="min-h-0 flex-1 overflow-hidden bg-white">
            <div className="-mt-[21px] grid grid-cols-[repeat(5,53px)]">
              {symbols.map((s, i) => (
                <button
                  key={i}
                  type="button"
                  aria-label={`Symbol ${i + 1}`}
                  className="h-[53px] w-[53px] border-r border-b border-[#a0a0a4]"
                >
                  <svg viewBox="0 0 52 52" className="h-[52px] w-[52px] overflow-hidden" aria-hidden="true">
                    {s}
                  </svg>
                </button>
              ))}
            </div>
          </div>
          <div className={`${track} flex w-[26px] shrink-0 flex-col`}>
            <ScrollArrow dir="up" label="Scroll symbols up" />
            <div className="flex-[221]" />
            <div className={`${raised} h-[160px] w-full`} />
            <div className="flex-[429]" />
            <ScrollArrow dir="down" label="Scroll symbols down" />
          </div>
        </div>
      </div>
      <svg className="pointer-events-none absolute top-[419px] -left-[9px] h-[88px] w-[88px]" viewBox="0 0 88 88" fill="none" aria-hidden="true">
        <circle cx="44" cy="44" r="41" stroke="#ed1c24" strokeWidth="5" />
      </svg>
    </aside>
  );
}

function MapCanvas() {
  return (
    <main className="relative mb-[2px] min-w-0 flex-1 overflow-hidden bg-white">
      <svg viewBox="336 156 1280 894" className="absolute inset-0 h-full w-full" fill="none" role="img" aria-label="Two crossing roads">
        <path d="M776.500 372 L1268 792.500 M1176 376.500 L816.500 784" stroke="#000" strokeWidth="29" />
        <path d="M776.500 372 L1268 792.500 M1176 376.500 L816.500 784" stroke="#e8a777" strokeWidth="16" />
      </svg>
      <span className="absolute top-[369px] left-[748px] font-['Lato'] text-[66px] leading-[66px] text-[#ed1c24]">2</span>
      <span className="absolute top-[475px] left-[1232px] font-['Lato'] text-[66px] leading-[66px] text-[#ed1c24]">1</span>
    </main>
  );
}

const sunken = "border border-t-[#a0a0a0] border-l-[#a0a0a0] border-r-white border-b-white";

function StatusBar() {
  return (
    <footer className="shrink-0">
      <div className="flex h-[26px] gap-[3px] text-[17px] leading-[26px]">
        <p className={`${sunken} min-w-0 flex-1 pl-px whitespace-nowrap`}>
          <b>Click</b>: Start a straight line. <b>Drag</b>: Start a curve. | More: Shift, Ctrl, Space
        </p>
        <div className={`${sunken} flex w-[77px] justify-between pl-[3px]`}>
          <svg viewBox="0 0 18 18" className="mt-1 h-[18px] w-[18px]" fill="none" aria-hidden="true">
            <path d="M10 10 L16 16" stroke="#909090" strokeWidth="3" strokeLinecap="round" />
            <circle cx="7" cy="7" r="5.500" fill="url(#lens)" stroke="#8ba7cc" strokeWidth="1.500" />
          </svg>
          <span>8x</span>
        </div>
        <div className={`${sunken} w-[179px] text-right`}>-9.26 38.26 (mm)</div>
      </div>
      <div className="flex h-[2px]">
        <span className="w-[72px] bg-[#404040]" />
        <span className="w-[516px] bg-[#bdbdbd]" />
        <span className="flex-1 bg-[#404040]" />
      </div>
    </footer>
  );
}

export default function App() {
  return (
    <div className="flex h-screen flex-col overflow-hidden bg-[#efefef] font-['Open_Sans','Noto_Sans',sans-serif] text-black">
      <Gradients />
      <TitleBar />
      <MenuBar />
      <ToolBars />
      <div className="flex min-h-0 flex-1">
        <ColorsPanel />
        <MapCanvas />
        <SymbolsPanel />
      </div>
      <StatusBar />
    </div>
  );
}
